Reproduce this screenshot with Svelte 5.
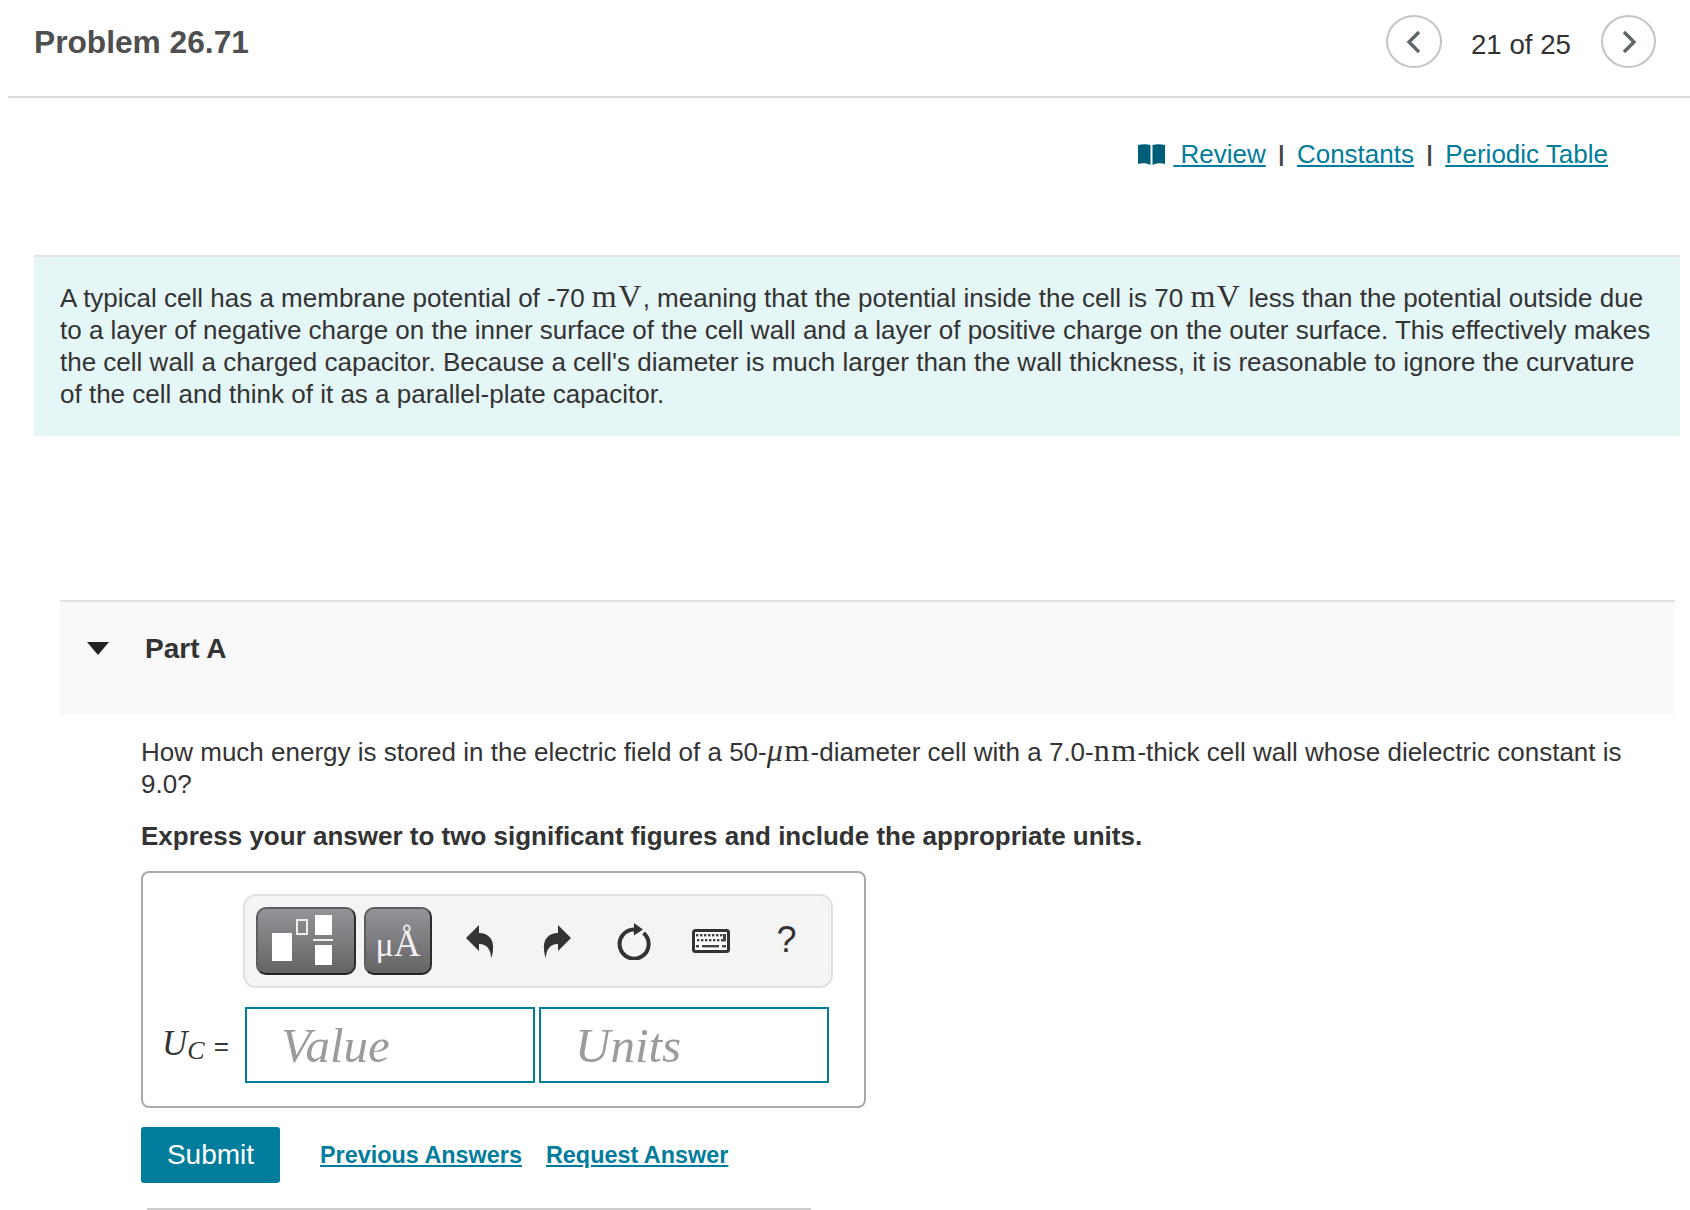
<script>
  const tools = ['undo', 'redo', 'reset', 'keyboard', 'help'];
  const keyRows = [
    [695, 699, 703, 707, 711, 715, 719],
    [696, 700, 704, 708, 712, 716],
  ];
</script>

<div class="page">
  <header class="top">
    <h1>Problem 26.71</h1>
    <nav class="pager">
      <button class="round" aria-label="Previous">
        <svg width="20" height="26" viewBox="0 0 20 26"><path d="M15 3 L5 13 L15 23" /></svg>
      </button>
      <span class="count">21 of 25</span>
      <button class="round next" aria-label="Next">
        <svg width="20" height="26" viewBox="0 0 20 26"><path d="M5 3 L15 13 L5 23" /></svg>
      </button>
    </nav>
  </header>

  <div class="links">
    <svg class="book" width="27" height="21" viewBox="0 0 27 21">
      <path d="M0 1 C4 0 9 0 12.5 1 V21 C9 19 4 19 0 20 Z" />
      <path d="M14.5 1 C18 0 23 0 27 1 V20 C23 19 18 19 14.5 21 Z" />
    </svg>
    <a class="review" href="#review">Review</a>
    <span class="sep">|</span>
    <a href="#constants">Constants</a>
    <span class="sep">|</span>
    <a href="#table">Periodic Table</a>
  </div>

  <section class="intro">
    <p>
      A typical cell has a membrane potential of -70 <span class="math">mV</span>, meaning that the potential inside the cell is 70 <span class="math">mV</span> less than the potential outside due
      to a layer of negative charge on the inner surface of the cell wall and a layer of positive charge on the outer surface. This effectively makes
      the cell wall a charged capacitor. Because a cell's diameter is much larger than the wall thickness, it is reasonable to ignore the curvature
      of the cell and think of it as a parallel-plate capacitor.
    </p>
  </section>

  <section class="part-head">
    <span class="caret"></span>
    <h2>Part A</h2>
  </section>

  <section class="part-body">
    <p class="question">
      How much energy is stored in the electric field of a 50-<span class="math"><i>μ</i>m</span>-diameter cell with a 7.0-<span class="math">nm</span>-thick cell wall whose dielectric constant is
      9.0?
    </p>
    <p class="instruction">Express your answer to two significant figures and include the appropriate units.</p>

    <div class="answer">
      <div class="toolbar">
        <button class="tpl wide" aria-label="Templates">
          <span class="base"></span>
          <span class="sup"></span>
          <span class="frac"><i></i><b></b><i></i></span>
        </button>
        <button class="tpl narrow" aria-label="Symbols"><span class="mu">μ</span><span class="ang">Å</span></button>
        <div class="tools">
          {#each tools as tool}
            <span class="tool">
              {#if tool === 'undo'}
                <svg width="28" height="33" viewBox="0 0 28 33"><path d="M0 13 L13 0 V8 C23 8 28 15 27 24 C27 28 26 31 25 33 C25 26 22 19 13 19 V26 Z" /></svg>
              {:else if tool === 'redo'}
                <svg width="28" height="33" viewBox="0 0 28 33"><path d="M28 13 L15 0 V8 C5 8 0 15 1 24 C1 28 2 31 3 33 C3 26 6 19 15 19 V26 Z" /></svg>
              {:else if tool === 'reset'}
                <svg width="34" height="37" viewBox="1 0 34 37">
                  <path class="ring" d="M19 6.6 A14.5 14.5 0 1 0 27.5 10" />
                  <path d="M18 0 L27 6.5 L18 12.5 Z" />
                </svg>
              {:else if tool === 'keyboard'}
                <svg width="38" height="24" viewBox="691 934 38 24">
                  <rect class="kb" x="692.5" y="935.5" width="35" height="21" rx="2" />
                  {#each keyRows[0] as x}<rect class="key" {x} y="939" width="2.4" height="2.4" />{/each}
                  {#each keyRows[1] as x}<rect class="key" {x} y="944" width="2.4" height="2.4" />{/each}
                  <rect class="key" x="722" y="939" width="3" height="7.4" />
                  <rect class="key" x="720" y="944" width="3" height="2.4" />
                  <rect class="key" x="695" y="950" width="3" height="2.4" />
                  <rect class="key" x="701" y="950" width="17" height="2.4" />
                  <rect class="key" x="721" y="950" width="4" height="2.4" />
                </svg>
              {:else}
                <span class="help">?</span>
              {/if}
            </span>
          {/each}
        </div>
      </div>

      <div class="fields">
        <span class="label"><i>U</i><i class="sub">C</i><span class="eq">=</span></span>
        <input class="field" placeholder="Value" />
        <input class="field" placeholder="Units" />
      </div>
    </div>

    <div class="actions">
      <button class="submit">Submit</button>
      <a class="strong first" href="#previous">Previous Answers</a>
      <a class="strong" href="#request">Request Answer</a>
    </div>
    <div class="rule"></div>
  </section>
</div>

<style>
  :global(body) {
    margin: 0;
    background: #fff;
  }

  .page {
    width: 1690px;
    height: 1210px;
    overflow: hidden;
    font-family: "Liberation Sans", Arial, sans-serif;
    font-size: 26px;
    line-height: 32px;
    color: #333;
  }

  .top {
    display: flex;
    justify-content: space-between;
    align-items: flex-start;
    margin-left: 8px;
    padding: 15px 34px 0 26px;
    border-bottom: 2px solid #ddd;
    height: 81px;
  }

  h1 {
    margin: 9px 0 0;
    font-size: 31.7px;
    line-height: 36px;
    color: #4f4f4f;
  }

  .pager {
    display: flex;
    align-items: center;
  }

  .round {
    display: flex;
    align-items: center;
    justify-content: center;
    width: 56px;
    height: 53px;
    padding: 0;
    background: #fff;
    border: 2px solid #c4c4c4;
    border-radius: 50%;
  }

  .round.next {
    width: 55px;
  }

  .round svg path {
    fill: none;
    stroke: #5f6668;
    stroke-width: 3.4;
  }

  .count {
    margin: 7px 30px 0 29px;
    font-size: 27.7px;
  }

  .links {
    display: flex;
    align-items: center;
    justify-content: flex-end;
    margin-top: 38px;
    padding-right: 82px;
    height: 36px;
  }

  .book {
    margin-right: 8px;
  }

  .book path {
    fill: #005f78;
  }

  a {
    color: #007c9c;
    text-decoration: underline;
  }

  /* the source link has a leading space inside the underline */
  .review {
    white-space: pre;
  }

  .review::before {
    content: " ";
    white-space: pre;
  }

  .sep {
    margin: 0 12.5px;
    font-size: 22px;
    font-weight: 700;
    color: #444;
  }

  .intro {
    margin: 83px 10px 0 34px;
    padding: 25px 26px 24px;
    height: 181px;
    box-sizing: border-box;
    background: #e5f6f6;
    border-top: 2px solid #dfe3e3;
  }

  p {
    margin: 0;
  }

  .intro p {
    width: 1600px;
  }

  .math {
    display: inline-block;
    font-family: "Liberation Serif", "Times New Roman", serif;
    font-size: 32px;
    line-height: 26px;
    letter-spacing: 1.4px;
  }

  .part-head {
    display: flex;
    align-items: flex-start;
    margin: 164px 15px 0 60px;
    height: 115px;
    box-sizing: border-box;
    padding-top: 31px;
    background: #f9f9f9;
    border-top: 2px solid #e0e0e0;
  }

  .caret {
    width: 0;
    height: 0;
    margin: 9px 0 0 27px;
    border-left: 11px solid transparent;
    border-right: 11px solid transparent;
    border-top: 13px solid #222;
  }

  h2 {
    margin: 0 0 0 36px;
    font-size: 28px;
    line-height: 32px;
    color: #333;
  }

  .part-body {
    padding: 21px 0 0 141px;
  }

  .question {
    width: 1520px;
  }

  .instruction {
    margin-top: 20px;
    font-weight: 700;
  }

  .answer {
    width: 725px;
    height: 237px;
    box-sizing: border-box;
    margin-top: 19px;
    padding: 21px 0 0 100px;
    border: 2px solid #aaa;
    border-radius: 8px;
  }

  .toolbar {
    display: flex;
    align-items: center;
    gap: 8px;
    width: 590px;
    height: 94px;
    box-sizing: border-box;
    padding-left: 11px;
    background: #f4f4f4;
    border: 2px solid #e0e0e0;
    border-radius: 13px;
  }

  .tpl {
    position: relative;
    height: 68px;
    padding: 0;
    background: linear-gradient(#949399, #646464);
    border: 2px solid #5d5d5d;
    border-bottom-color: #222;
    border-right-color: #2c2c2c;
    border-radius: 10px;
    box-sizing: border-box;
  }

  .wide {
    width: 100px;
  }

  .narrow {
    width: 68px;
    display: flex;
    align-items: baseline;
    justify-content: center;
    padding-top: 11px;
    color: #f2f2f2;
    font-family: "Liberation Serif", serif;
    line-height: 48px;
  }

  .base,
  .sup,
  .frac {
    position: absolute;
  }

  .base {
    left: 14px;
    top: 24px;
    width: 20px;
    height: 28px;
    background: #fff;
  }

  .sup {
    left: 38px;
    top: 10px;
    width: 12px;
    height: 16px;
    box-sizing: border-box;
    border: 2px solid #eee;
  }

  .frac {
    left: 55px;
    top: 6px;
    display: flex;
    flex-direction: column;
    align-items: center;
    width: 20px;
  }

  .frac i {
    width: 17px;
    height: 20px;
    background: #fff;
  }

  .frac b {
    width: 20px;
    height: 2px;
    margin: 4px 0;
    background: #eee;
  }

  .mu {
    font-size: 34px;
  }

  .ang {
    font-size: 37px;
  }

  .tools {
    display: flex;
    margin-left: 1px;
  }

  .tool {
    display: flex;
    align-items: center;
    justify-content: center;
    width: 77px;
    height: 60px;
  }

  .tool svg path {
    fill: #333;
  }

  .tool svg .ring {
    fill: none;
    stroke: #333;
    stroke-width: 4;
  }

  .kb {
    fill: #fff;
    stroke: #333;
    stroke-width: 3;
  }

  .key {
    fill: #444;
  }

  .help {
    margin: -2px 2px 0 0;
    font-size: 36px;
    line-height: 40px;
    color: #333;
  }

  .fields {
    display: flex;
    align-items: center;
    margin: 19px 0 0 -78px;
  }

  .label {
    display: flex;
    align-items: baseline;
    width: 80px;
    margin-left: -3px;
    margin-right: 3px;
    font-family: "Liberation Serif", serif;
    font-size: 35px;
  }

  .sub {
    font-size: 26px;
    transform: translateY(4px);
  }

  .eq {
    margin-left: 9px;
    font-family: "Liberation Sans", sans-serif;
    font-size: 26px;
  }

  .field {
    width: 290px;
    height: 76px;
    box-sizing: border-box;
    padding: 0 0 0 34px;
    margin-right: 4px;
    border: 2px solid #007c9c;
    border-radius: 0;
    background: #fff;
    font-family: "Liberation Serif", serif;
    font-size: 49px;
    font-style: italic;
    outline: none;
  }

  .field::placeholder {
    color: #9b9b9b;
    opacity: 1;
  }

  .actions {
    display: flex;
    align-items: center;
    margin-top: 19px;
  }

  .submit {
    width: 139px;
    height: 56px;
    background: #007c9c;
    color: #fff;
    border: 0;
    border-radius: 3px;
    font-family: "Liberation Sans", sans-serif;
    font-size: 28px;
  }

  .strong {
    margin-left: 24px;
    font-weight: 700;
    font-size: 23.4px;
  }

  .strong.first {
    margin-left: 40px;
  }

  .rule {
    width: 664px;
    margin: 25px 0 0 6px;
    border-top: 2px solid #ccc;
  }
</style>
